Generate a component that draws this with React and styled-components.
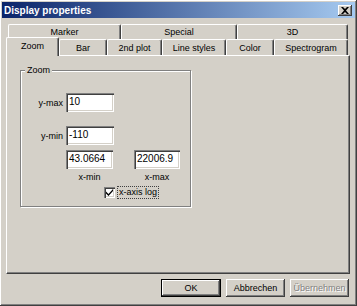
import React from 'react';
import styled, { createGlobalStyle } from 'styled-components';

const GlobalStyle = createGlobalStyle`
  html, body {
    margin: 0;
    padding: 0;
    background: #d4d0c8;
  }
  * {
    box-sizing: border-box;
  }
`;

const backTabs = [
  { label: 'Marker', width: 113 },
  { label: 'Special', width: 116 },
  { label: '3D', width: 111 },
];

const frontTabs = [
  { label: 'Zoom', width: 53, active: true },
  { label: 'Bar', width: 48 },
  { label: '2nd plot', width: 55 },
  { label: 'Line styles', width: 64 },
  { label: 'Color', width: 48 },
  { label: 'Spectrogram', width: 74 },
];

const App = () => {
  return (
    <>
      <GlobalStyle />
      <Styled.Window>
        <Styled.TitleBar>
          <Styled.Title>Display properties</Styled.Title>
          <Styled.CloseButton>
            <svg width="8" height="7" viewBox="0 0 8 7">
              <path d="M0 0h2l2 2 2-2h2L5 3.5 8 7H6L4 5 2 7H0l3-3.5z" fill="#000" />
            </svg>
          </Styled.CloseButton>
        </Styled.TitleBar>

        <Styled.Body>
          <Styled.TabStrip>
            <Styled.TabRow $back>
              {backTabs.map((t) => (
                <Styled.Tab key={t.label} $width={t.width} $back>
                  {t.label}
                </Styled.Tab>
              ))}
            </Styled.TabRow>
            <Styled.TabRow>
              {frontTabs.map((t) => (
                <Styled.Tab key={t.label} $width={t.width} $active={t.active}>
                  {t.label}
                </Styled.Tab>
              ))}
            </Styled.TabRow>
          </Styled.TabStrip>

          <Styled.Panel>
            <Styled.Group>
              <Styled.GroupLabel>Zoom</Styled.GroupLabel>

              <Styled.FieldRow $mt={22}>
                <Styled.Label>y-max</Styled.Label>
                <Styled.Input $width={48}>10</Styled.Input>
              </Styled.FieldRow>

              <Styled.FieldRow $mt={14}>
                <Styled.Label>y-min</Styled.Label>
                <Styled.Input $width={48}>-110</Styled.Input>
              </Styled.FieldRow>

              <Styled.FieldRow $mt={5}>
                <Styled.Label />
                <Styled.Input $width={47}>43.0664</Styled.Input>
                <Styled.Input $width={46} $ml={21}>22006.9</Styled.Input>
              </Styled.FieldRow>

              <Styled.FieldRow $mt={2}>
                <Styled.Label />
                <Styled.Caption $width={47}>x-min</Styled.Caption>
                <Styled.Caption $width={46} $ml={21}>x-max</Styled.Caption>
              </Styled.FieldRow>

              <Styled.CheckRow>
                <Styled.CheckBox>
                  <svg width="7" height="7" viewBox="0 0 7 7">
                    <path d="M0 2.5l2.5 2.5L7 0v2L2.5 7 0 4.5z" fill="#000" />
                  </svg>
                </Styled.CheckBox>
                <Styled.CheckLabel>x-axis log</Styled.CheckLabel>
              </Styled.CheckRow>
            </Styled.Group>
          </Styled.Panel>

          <Styled.ButtonRow>
            <Styled.Button $default>OK</Styled.Button>
            <Styled.Button>Abbrechen</Styled.Button>
            <Styled.Button $disabled>Übernehmen</Styled.Button>
          </Styled.ButtonRow>
        </Styled.Body>
      </Styled.Window>
    </>
  );
};

const raised = `
  box-shadow: inset -1px -1px #404040, inset 1px 1px #ffffff,
    inset -2px -2px #808080, inset 2px 2px #d4d0c8;
`;

const Styled = {
  Window: styled.div`
    width: 357px;
    height: 306px;
    padding: 2px;
    background: #d4d0c8;
    font-family: 'Liberation Sans', Arial, sans-serif;
    font-size: 9px;
    color: #000;
    ${raised}
  `,
  TitleBar: styled.div`
    height: 16px;
    display: flex;
    align-items: center;
    justify-content: space-between;
    padding: 0 3px 0 2px;
    background: linear-gradient(to right, #0a246a, #a6caf0);
  `,
  Title: styled.span`
    color: #fff;
    font-weight: bold;
    font-size: 10px;
  `,
  CloseButton: styled.div`
    width: 14px;
    height: 11px;
    display: flex;
    align-items: center;
    justify-content: center;
    background: #d4d0c8;
    box-shadow: inset -1px -1px #404040, inset 1px 1px #ffffff,
      inset -2px -2px #808080;
  `,
  Body: styled.div`
    padding: 6px 5px 0 4px;
  `,
  TabStrip: styled.div`
    display: flex;
    flex-direction: column;
  `,
  TabRow: styled.div`
    display: flex;
    align-items: flex-end;
    height: ${({ $back }) => ($back ? '15px' : '16px')};
    margin-left: ${({ $back }) => ($back ? '2px' : '0')};
    position: relative;
    z-index: ${({ $back }) => ($back ? 0 : 1)};
  `,
  Tab: styled.div`
    width: ${({ $width }) => $width}px;
    height: ${({ $active, $back }) => ($active ? '19px' : $back ? '15px' : '16px')};
    margin-bottom: ${({ $active }) => ($active ? '-1px' : '0')};
    margin-left: ${({ $active }) => ($active ? '0' : '0')};
    display: flex;
    align-items: center;
    justify-content: center;
    padding-bottom: ${({ $active }) => ($active ? '3px' : '0')};
    background: #d4d0c8;
    border-top: 1px solid #ffffff;
    border-left: 1px solid #ffffff;
    border-right: 1px solid #404040;
    border-radius: 2px 2px 0 0;
    box-shadow: inset -1px 0 #808080;
    white-space: nowrap;
    position: relative;
    &:first-child {
      margin-left: ${({ $back }) => ($back ? '0' : '0')};
    }
  `,
  Panel: styled.div`
    width: 344px;
    height: 219px;
    padding: 14px 0 0 13px;
    background: #d4d0c8;
    border-top: 1px solid #ffffff;
    border-left: 1px solid #ffffff;
    border-right: 1px solid #404040;
    border-bottom: 1px solid #404040;
    box-shadow: inset -1px -1px #808080;
  `,
  Group: styled.div`
    position: relative;
    width: 171px;
    height: 137px;
    border: 1px solid #808080;
    box-shadow: 1px 1px 0 #ffffff, inset 1px 1px 0 #ffffff;
    display: flex;
    flex-direction: column;
  `,
  GroupLabel: styled.span`
    position: absolute;
    top: -6px;
    left: 4px;
    padding: 0 2px;
    background: #d4d0c8;
    line-height: 11px;
  `,
  FieldRow: styled.div`
    display: flex;
    align-items: center;
    margin-top: ${({ $mt }) => $mt}px;
  `,
  Label: styled.span`
    width: 45px;
    text-align: right;
    padding-right: 3px;
  `,
  Input: styled.div`
    width: ${({ $width }) => $width}px;
    height: 19px;
    margin-left: ${({ $ml }) => $ml || 0}px;
    padding: 3px 0 0 3px;
    background: #ffffff;
    font-size: 10px;
    box-shadow: inset 1px 1px #808080, inset 2px 2px #404040,
      inset -1px -1px #ffffff, inset -2px -2px #d4d0c8;
  `,
  Caption: styled.span`
    width: ${({ $width }) => $width}px;
    margin-left: ${({ $ml }) => $ml || 0}px;
    text-align: center;
    line-height: 12px;
  `,
  CheckRow: styled.div`
    display: flex;
    align-items: center;
    margin: 4px 0 0 83px;
  `,
  CheckBox: styled.div`
    width: 11px;
    height: 11px;
    display: flex;
    align-items: center;
    justify-content: center;
    background: #ffffff;
    box-shadow: inset 1px 1px #808080, inset 2px 2px #404040,
      inset -1px -1px #ffffff, inset -2px -2px #d4d0c8;
  `,
  CheckLabel: styled.span`
    margin-left: 3px;
    padding: 0 1px;
    line-height: 11px;
    outline: 1px dotted #404040;
  `,
  ButtonRow: styled.div`
    display: flex;
    justify-content: flex-end;
    gap: 5px;
    margin-top: 5px;
    padding-right: 1px;
  `,
  Button: styled.div`
    width: ${({ $default }) => ($default ? '60px' : '59px')};
    height: 18px;
    display: flex;
    align-items: center;
    justify-content: center;
    background: #d4d0c8;
    color: ${({ $disabled }) => ($disabled ? '#808080' : '#000')};
    text-shadow: ${({ $disabled }) => ($disabled ? '1px 1px #ffffff' : 'none')};
    border: ${({ $default }) => ($default ? '1px solid #000' : 'none')};
    ${raised}
  `,
};

export default App;
